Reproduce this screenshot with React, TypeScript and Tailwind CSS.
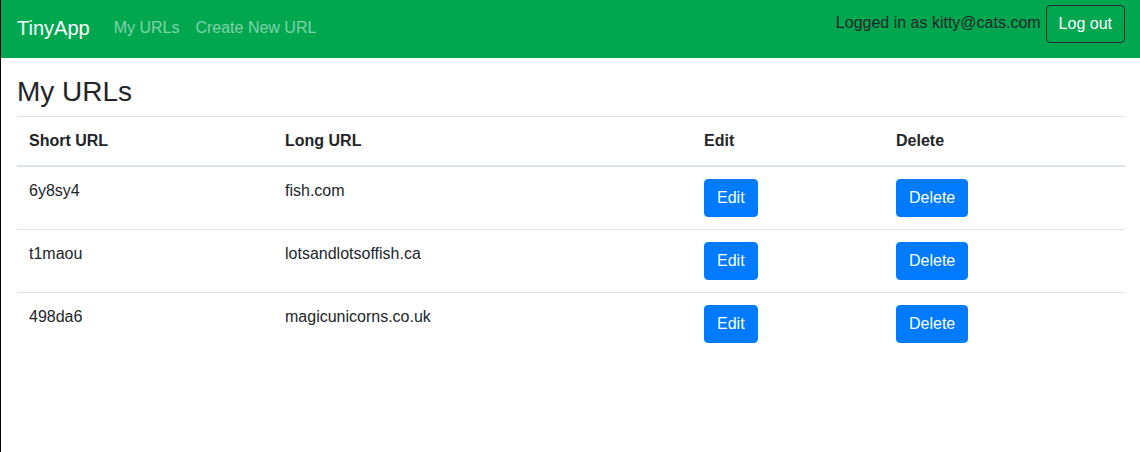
const urls = [
  { short: '6y8sy4', long: 'fish.com' },
  { short: 't1maou', long: 'lotsandlotsoffish.ca' },
  { short: '498da6', long: 'magicunicorns.co.uk' },
]

const App = () => {
  return (
    <div className="min-h-[452px] bg-white border-l border-black text-[#212529] font-['Liberation_Sans',Arial,sans-serif] text-base">
      <nav className="h-[58px] bg-[#00a74f] pl-4 pr-[15px] pt-[8px] flex items-start">
        <a className="py-[5px] text-xl leading-[30px] text-white mr-4">TinyApp</a>
        <div className="flex">
          <a className="px-2 py-2 leading-6 text-white/50">My URLs</a>
          <a className="px-2 py-2 leading-6 text-white/50">Create New URL</a>
        </div>
        <div className="ml-auto -mt-[3px] flex items-start gap-[5px]">
          <span className="leading-6 mt-[6px]">Logged in as kitty@cats.com</span>
          <button className="border border-[#212529] rounded px-3 py-[6px] leading-6 text-white">
            Log out
          </button>
        </div>
      </nav>

      <main className="pl-4 pr-[15px] pt-4">
        <h3 className="text-[28px] leading-[1.2] font-medium mt-px mb-[7px]">My URLs</h3>
        <table className="w-full border-collapse">
          <thead>
            <tr>
              <th className="w-[256px] text-left font-bold px-3 py-3 leading-6 border-t border-b-2 border-[#dee2e6]">Short URL</th>
              <th className="w-[419px] text-left font-bold px-3 py-3 leading-6 border-t border-b-2 border-[#dee2e6]">Long URL</th>
              <th className="w-[192px] text-left font-bold px-3 py-3 leading-6 border-t border-b-2 border-[#dee2e6]">Edit</th>
              <th className="text-left font-bold px-3 py-3 leading-6 border-t border-b-2 border-[#dee2e6]">Delete</th>
            </tr>
          </thead>
          <tbody>
            {urls.map((u, i) => (
              <tr key={u.short} className={i > 0 ? 'border-t border-[#dee2e6]' : ''}>
                <td className="align-top px-3 py-3 leading-6">{u.short}</td>
                <td className="align-top px-3 py-3 leading-6">{u.long}</td>
                <td className="align-top px-3 py-3">
                  <button className="bg-[#007bff] border border-[#007bff] text-white rounded px-3 py-[6px] leading-6">Edit</button>
                </td>
                <td className="align-top px-3 py-3">
                  <button className="bg-[#007bff] border border-[#007bff] text-white rounded px-3 py-[6px] leading-6">Delete</button>
                </td>
              </tr>
            ))}
          </tbody>
        </table>
      </main>
    </div>
  )
}

export default App
